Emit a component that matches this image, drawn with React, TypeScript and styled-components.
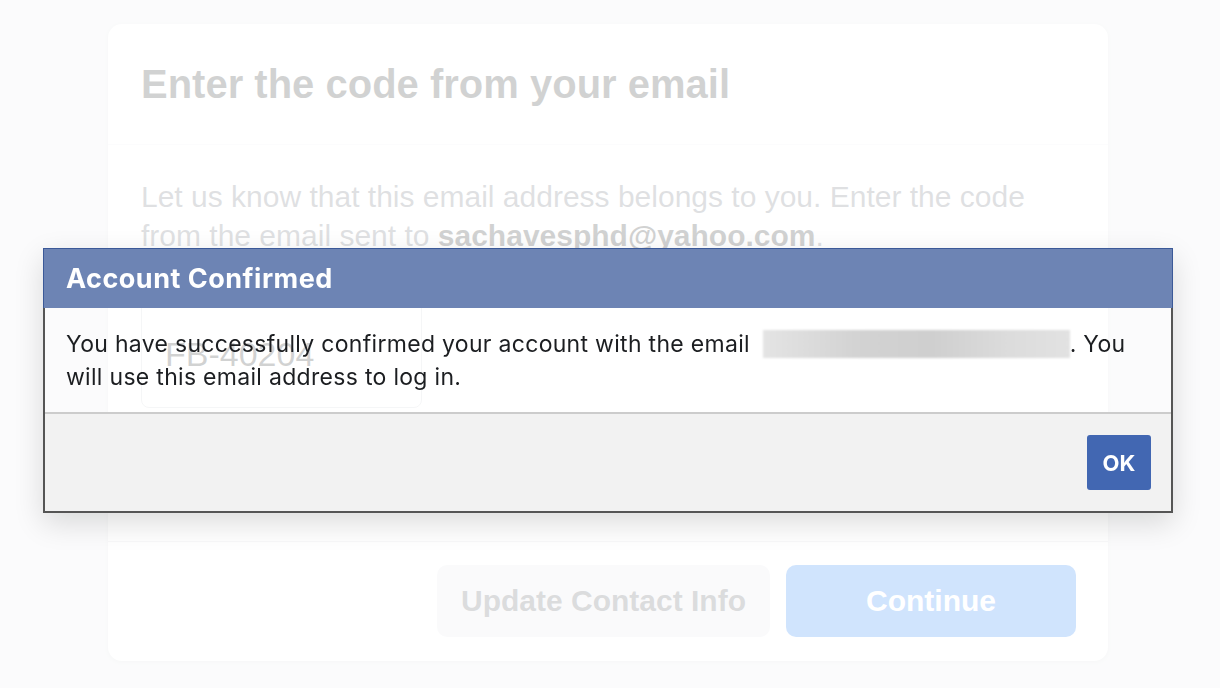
import styled, { createGlobalStyle } from 'styled-components'

const GlobalStyle = createGlobalStyle`
	html, body {
		margin: 0;
		padding: 0;
		background: #e9ebee;
	}
	* {
		box-sizing: border-box;
	}
`

const Page = styled.div`
	min-height: 100vh;
	padding: 24px 0 0 108px;
	font-family: "Liberation Sans", Arial, sans-serif;
`
const Card = styled.div`
	width: 1000px;
	background: #fff;
	border-radius: 14px;
	box-shadow: 0 1px 4px rgba(0, 0, 0, 0.1);
	display: flex;
	flex-direction: column;
`
const CardHeader = styled.div`
	height: 121px;
	padding: 0 33px;
	display: flex;
	align-items: center;
	border-bottom: 1px solid #f0f1f3;
`
const Title = styled.h1`
	margin: 0;
	font-size: 40px;
	font-weight: bold;
	color: #1c1e21;
`
const CardBody = styled.div`
	height: 397px;
	padding: 32px 33px 0;
	border-bottom: 1px solid #dadde1;
`
const Lead = styled.p`
	margin: 0 0 45px;
	font-size: 30px;
	line-height: 39px;
	color: #606770;

	b {
		color: #1c1e21;
	}
`
const CodeInput = styled.div`
	width: 281px;
	height: 108px;
	border: 1px solid #ccd0d5;
	border-radius: 8px;
	padding: 0 23px;
	display: flex;
	align-items: center;
	font-size: 34px;
	color: #1c1e21;
`
const CardFooter = styled.div`
	padding: 23px 32px 24px;
	display: flex;
	justify-content: flex-end;
	gap: 16px;
`
const PageButton = styled.div<{ $primary?: boolean }>`
	height: 72px;
	width: ${p => (p.$primary ? '290px' : '333px')};
	border-radius: 10px;
	display: flex;
	align-items: center;
	justify-content: center;
	font-size: 30px;
	font-weight: bold;
	background: ${p => (p.$primary ? '#1877f2' : '#e4e6eb')};
	color: ${p => (p.$primary ? '#fff' : '#4b4f56')};
`

const Overlay = styled.div`
	position: fixed;
	inset: 0;
	background: rgba(255, 255, 255, 0.8);
`
const Dialog = styled.div`
	position: fixed;
	left: 43px;
	top: 248px;
	width: 1130px;
	font-family: Inter, "Liberation Sans", sans-serif;
	box-shadow: 0 10px 28px rgba(0, 0, 0, 0.14);
`
const DialogHeader = styled.div`
	height: 60px;
	background: #6d84b4;
	border: 1px solid #3b5998;
	border-bottom: none;
	padding: 0 22px;
	display: flex;
	align-items: center;
	color: #fff;
	font-size: 27px;
	letter-spacing: 0.5px;
	font-weight: bold;
`
const DialogFrame = styled.div`
	border: 2px solid #555;
	border-top: none;
`
const DialogBody = styled.div`
	padding: 20px 21px 18px;
	font-size: 23px;
	letter-spacing: 0.3px;
	line-height: 33px;
	color: #1c1e21;
	border-bottom: 2px solid #ccc;
`
const Redacted = styled.span`
	display: inline-block;
	width: 307px;
	height: 28px;
	margin-left: 6px;
	vertical-align: -6px;
	background: linear-gradient(90deg, #e4e4e4, #d3d3d3 30%, #cfcfcf 55%, #dcdcdc 80%, #e2e2e2);
	filter: blur(1px);
`
const DialogFooter = styled.div`
	height: 97px;
	background: #f2f2f2;
	padding: 21px 20px;
	display: flex;
	justify-content: flex-end;
`
const OkButton = styled.div`
	width: 64px;
	height: 55px;
	background: #4267b2;
	border-radius: 3px;
	color: #fff;
	font-size: 22px;
	font-weight: bold;
	display: flex;
	align-items: center;
	justify-content: center;
`

export default function App() {
	return (
		<>
			<GlobalStyle />
			<Page>
				<Card>
					<CardHeader>
						<Title>Enter the code from your email</Title>
					</CardHeader>
					<CardBody>
						<Lead>
							Let us know that this email address belongs to you. Enter the code from the email sent to{' '}
							<b>sachavesphd@yahoo.com</b>.
						</Lead>
						<CodeInput>FB-40204</CodeInput>
					</CardBody>
					<CardFooter>
						<PageButton>Update Contact Info</PageButton>
						<PageButton $primary>Continue</PageButton>
					</CardFooter>
				</Card>
			</Page>
			<Overlay />
			<Dialog>
				<DialogHeader>Account Confirmed</DialogHeader>
				<DialogFrame>
					<DialogBody>
						You have successfully confirmed your account with the email <Redacted />. You will use
						this email address to log in.
					</DialogBody>
					<DialogFooter>
						<OkButton>OK</OkButton>
					</DialogFooter>
				</DialogFrame>
			</Dialog>
		</>
	)
}
